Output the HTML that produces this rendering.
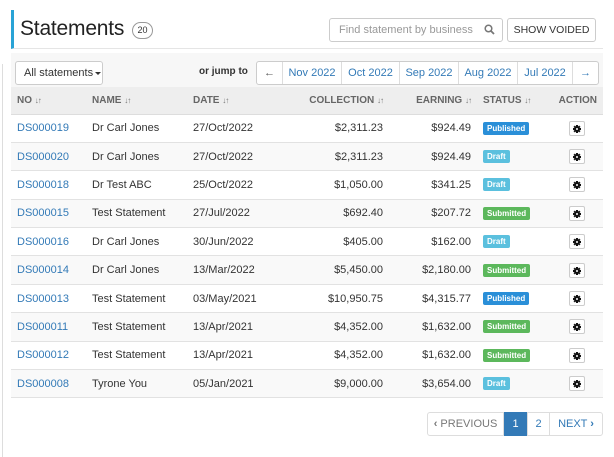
<!DOCTYPE html>
<html><head><meta charset="utf-8"><style>
*{box-sizing:border-box;margin:0;padding:0}
body{width:614px;height:457px;background:#fff;font-family:"Liberation Sans",sans-serif;font-size:11px;color:#333;position:relative;overflow:hidden}
.abs{position:absolute}
.hdr{left:11px;top:10px;width:592px;height:39px;border-left:3px solid #29a3d6;border-bottom:1px solid #e5e5e5;background:#fff}
.title{left:20px;top:17px;font-size:21px;color:#222;letter-spacing:-0.2px}
.badge{left:132px;top:22px;width:21px;height:17px;border:1px solid #999;border-radius:9px;font-size:9px;text-align:center;line-height:15px}
.search{left:329px;top:18px;width:174px;height:24px;border:1px solid #ccc;border-radius:3px;color:#999;font-size:11px;padding:5px 9px}
.btn{border:1px solid #ccc;border-radius:3px;background:#fff}
.tb{left:11px;top:53px;width:592px;height:34px;background:#f7f7f7}
table{position:absolute;left:11px;top:87px;width:592px;border-collapse:collapse}
th{height:27px;background:#eee;font-size:10px;font-weight:bold;color:#666;text-align:left;padding:0 6px;border-bottom:1px solid #ddd}
th i{font-style:normal;font-size:8px;font-weight:normal;color:#777;letter-spacing:-1px}
td{height:28.4px;padding:0 6px;border-bottom:1px solid #e2e2e2}
tr:nth-child(odd) td{background:#f9f9f9}
.r{text-align:right}
a{color:#337ab7;text-decoration:none}
.lab{display:inline-block;color:#fff;font-size:8px;font-weight:bold;padding:2px 4px;border-radius:2px}
.P{background:#2a8fd8}.D{background:#5bc0de}.S{background:#5cb85c}
.g{display:inline-block;width:16px;height:15px;border:1px solid #ccc;border-radius:2px;background:#fff;vertical-align:middle;position:relative}
.g svg{position:absolute;left:3px;top:3px}
.pg{top:412px;height:24px;border:1px solid #ddd;font-size:11px;line-height:22px;text-align:center;color:#337ab7;background:#fff}
.caret{display:inline-block;width:0;height:0;border-left:3px solid transparent;border-right:3px solid transparent;border-top:3px solid #333;vertical-align:middle;margin-left:2px}
</style></head><body>
<svg width="0" height="0" style="position:absolute"><defs><g id="gear"><circle cx="4" cy="4" r="2.6" fill="#111"/><rect x="3" y="0" width="2" height="8" fill="#111"/><rect x="0" y="3" width="8" height="2" fill="#111"/><rect x="3" y="0" width="2" height="8" fill="#111" transform="rotate(45 4 4)"/><rect x="3" y="0" width="2" height="8" fill="#111" transform="rotate(-45 4 4)"/><circle cx="4" cy="4" r="1" fill="#fff"/></g></defs></svg>
<div class="abs" style="left:2px;top:64px;width:1px;height:393px;background:#ddd"></div>
<div class="abs hdr"></div>
<div class="abs title">Statements</div>
<div class="abs badge">20</div>
<div class="abs search">Find statement by business<svg style="position:absolute;right:7px;top:5px" width="11" height="11" viewBox="0 0 11 11"><circle cx="4.5" cy="4.5" r="3.3" fill="none" stroke="#777" stroke-width="1.5"/><path d="M7 7l3 3" stroke="#777" stroke-width="1.8"/></svg></div>
<div class="abs btn" style="left:507px;top:18px;width:89px;height:24px;font-size:10.5px;text-align:center;line-height:22px;color:#333">SHOW VOIDED</div>
<div class="abs tb"></div>
<div class="abs btn" style="left:15px;top:61px;width:88px;height:24px;font-size:11px;line-height:22px;padding-left:8px;white-space:nowrap">All statements<span class="caret"></span></div>
<div class="abs" style="left:199px;top:66px;font-weight:bold;font-size:10px;color:#333">or jump to</div>
<div class="abs btn" style="left:256px;top:61px;width:343px;height:24px;display:flex;font-size:11px;line-height:22px;color:#337ab7">
<div style="width:26px;text-align:center;color:#555;border-right:1px solid #ddd">&#8592;</div>
<div style="width:59px;text-align:center;border-right:1px solid #ddd">Nov 2022</div>
<div style="width:58px;text-align:center;border-right:1px solid #ddd">Oct 2022</div>
<div style="width:59px;text-align:center;border-right:1px solid #ddd">Sep 2022</div>
<div style="width:59px;text-align:center;border-right:1px solid #ddd">Aug 2022</div>
<div style="width:55px;text-align:center;border-right:1px solid #ddd">Jul 2022</div>
<div style="flex:1;text-align:center">&#8594;</div>
</div>
<table>
<tr><th style="width:75px">NO <i>↓↑</i></th><th style="width:101px">NAME <i>↓↑</i></th><th style="width:90px">DATE <i>↓↑</i></th><th style="width:112px;text-align:right">COLLECTION <i>↓↑</i></th><th style="width:88px;text-align:right">EARNING <i>↓↑</i></th><th style="width:70px">STATUS <i>↓↑</i></th><th style="text-align:right">ACTION</th></tr>
<tr><td><a>DS000019</a></td><td>Dr Carl Jones</td><td>27/Oct/2022</td><td class="r">$2,311.23</td><td class="r">$924.49</td><td><span class="lab P">Published</span></td><td class="r" style="padding-right:18px"><span class="g"><svg width="8" height="8"><use href="#gear"/></svg></span></td></tr>
<tr><td><a>DS000020</a></td><td>Dr Carl Jones</td><td>27/Oct/2022</td><td class="r">$2,311.23</td><td class="r">$924.49</td><td><span class="lab D">Draft</span></td><td class="r" style="padding-right:18px"><span class="g"><svg width="8" height="8"><use href="#gear"/></svg></span></td></tr>
<tr><td><a>DS000018</a></td><td>Dr Test ABC</td><td>25/Oct/2022</td><td class="r">$1,050.00</td><td class="r">$341.25</td><td><span class="lab D">Draft</span></td><td class="r" style="padding-right:18px"><span class="g"><svg width="8" height="8"><use href="#gear"/></svg></span></td></tr>
<tr><td><a>DS000015</a></td><td>Test Statement</td><td>27/Jul/2022</td><td class="r">$692.40</td><td class="r">$207.72</td><td><span class="lab S">Submitted</span></td><td class="r" style="padding-right:18px"><span class="g"><svg width="8" height="8"><use href="#gear"/></svg></span></td></tr>
<tr><td><a>DS000016</a></td><td>Dr Carl Jones</td><td>30/Jun/2022</td><td class="r">$405.00</td><td class="r">$162.00</td><td><span class="lab D">Draft</span></td><td class="r" style="padding-right:18px"><span class="g"><svg width="8" height="8"><use href="#gear"/></svg></span></td></tr>
<tr><td><a>DS000014</a></td><td>Dr Carl Jones</td><td>13/Mar/2022</td><td class="r">$5,450.00</td><td class="r">$2,180.00</td><td><span class="lab S">Submitted</span></td><td class="r" style="padding-right:18px"><span class="g"><svg width="8" height="8"><use href="#gear"/></svg></span></td></tr>
<tr><td><a>DS000013</a></td><td>Test Statement</td><td>03/May/2021</td><td class="r">$10,950.75</td><td class="r">$4,315.77</td><td><span class="lab P">Published</span></td><td class="r" style="padding-right:18px"><span class="g"><svg width="8" height="8"><use href="#gear"/></svg></span></td></tr>
<tr><td><a>DS000011</a></td><td>Test Statement</td><td>13/Apr/2021</td><td class="r">$4,352.00</td><td class="r">$1,632.00</td><td><span class="lab S">Submitted</span></td><td class="r" style="padding-right:18px"><span class="g"><svg width="8" height="8"><use href="#gear"/></svg></span></td></tr>
<tr><td><a>DS000012</a></td><td>Test Statement</td><td>13/Apr/2021</td><td class="r">$4,352.00</td><td class="r">$1,632.00</td><td><span class="lab S">Submitted</span></td><td class="r" style="padding-right:18px"><span class="g"><svg width="8" height="8"><use href="#gear"/></svg></span></td></tr>
<tr><td><a>DS000008</a></td><td>Tyrone You</td><td>05/Jan/2021</td><td class="r">$9,000.00</td><td class="r">$3,654.00</td><td><span class="lab D">Draft</span></td><td class="r" style="padding-right:18px"><span class="g"><svg width="8" height="8"><use href="#gear"/></svg></span></td></tr>
</table>
<div class="abs pg" style="left:427px;width:77px;color:#777;border-radius:3px 0 0 3px"><b>&#8249;</b> PREVIOUS</div>
<div class="abs pg" style="left:504px;width:23px;background:#337ab7;border-color:#337ab7;color:#fff">1</div>
<div class="abs pg" style="left:527px;width:23px">2</div>
<div class="abs pg" style="left:549px;width:54px;border-radius:0 3px 3px 0">NEXT <b>&#8250;</b></div>
</body></html>
